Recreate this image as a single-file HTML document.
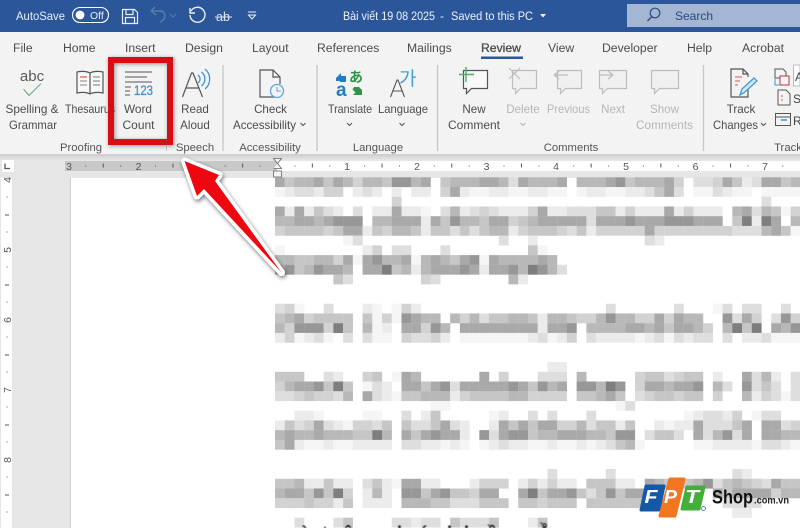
<!DOCTYPE html>
<html><head><meta charset="utf-8"><style>
html,body{margin:0;padding:0;width:800px;height:528px;overflow:hidden;background:#fff}
svg{position:absolute;left:0;top:0;display:block}
text{font-family:"Liberation Sans","Noto Sans CJK KR",sans-serif}
.l{font-size:11.6px;fill:#4c4c4c;text-anchor:middle}
.d{font-size:11.6px;fill:#b6b6b6;text-anchor:middle}
.g{font-size:11.3px;fill:#555;text-anchor:middle}
.tab{font-size:12.2px;fill:#4c4c4c}
.r{font-size:10.5px;fill:#555;text-anchor:middle}
#bt{position:absolute;left:0;top:520px;width:800px;height:8px;overflow:hidden;filter:blur(.4px)}
#bt span{position:absolute;top:1px;height:7px;width:14px;font:bold 18px/24px "Liberation Sans",sans-serif;color:#111}
</style></head><body>
<svg width="800" height="528" viewBox="0 0 800 528" style="filter:blur(.35px)">
<defs><linearGradient id="sh" x1="0" y1="0" x2="0" y2="1"><stop offset="0" stop-color="#cccccc"/><stop offset="1" stop-color="#e6e6e6"/></linearGradient>
<filter id="ds" x="-20%" y="-20%" width="150%" height="150%"><feDropShadow dx="1" dy="2" stdDeviation="2" flood-color="#000" flood-opacity=".55"/></filter>
<filter id="ds2" x="-20%" y="-20%" width="140%" height="140%"><feDropShadow dx="1" dy="1" stdDeviation="2" flood-color="#000" flood-opacity=".4"/></filter></defs>
<rect width="800" height="528" fill="#fff"/>
<!-- title bar -->
<rect width="800" height="32" fill="#2b579a"/>
<text x="16" y="20" font-size="12.2" fill="#e8eef7" textLength="49" lengthAdjust="spacingAndGlyphs">AutoSave</text>
<rect x="72.500" y="7.500" width="36" height="15" rx="7.500" fill="none" stroke="#fff" stroke-width="1.100"/>
<circle cx="80" cy="15" r="4.400" fill="#fff"/>
<text x="90" y="19" font-size="10.500" fill="#e8eef7">Off</text>
<path d="M122.500 9.500h12l3 3v11h-15zM126 9.500v5h7v-5M125.500 23.500v-6h9v6" fill="none" stroke="#e8eef7" stroke-width="1.200"/>
<path d="M151 11l4-4M151 11l5 4M151 11h9c4 0 5 3 5 5s-2 5-5 6" fill="none" stroke="#5c7cb0" stroke-width="1.400"/>
<path d="M170 14l3 3 3-3" fill="none" stroke="#5c7cb0" stroke-width="1"/>
<path d="M190 8v5h5M191 11a7.500 7.500 0 1 1-1 4" fill="none" stroke="#e8eef7" stroke-width="1.400"/>
<text x="216" y="21" font-size="12.500" fill="#dfe6f2">ab</text><path d="M215 17h17" stroke="#dfe6f2"/>
<path d="M248 12h8M248.500 15h7l-3.500 4z" fill="none" stroke="#e8eef7"/>
<text x="343" y="20" font-size="12.200" fill="#eef2f8" textLength="92" lengthAdjust="spacingAndGlyphs">Bài viết 19 08 2025</text>
<text x="440" y="20" font-size="12.200" fill="#eef2f8">-</text>
<text x="451" y="20" font-size="12.200" fill="#eef2f8" textLength="82" lengthAdjust="spacingAndGlyphs">Saved to this PC</text>
<path d="M540 14h6l-3 3.500z" fill="#eef2f8"/>
<rect x="627" y="4" width="173" height="23" fill="#a3b6d3"/>
<circle cx="655" cy="13" r="4.800" fill="none" stroke="#2b4a7d" stroke-width="1.200"/><path d="M651.500 17l-4 4" stroke="#2b4a7d" stroke-width="1.300"/>
<text x="675" y="20" font-size="12" fill="#2c4a7c">Search</text>
<!-- ribbon -->
<rect y="32" width="800" height="123" fill="#f3f3f3"/>
<text class="tab" x="13" y="52">File</text><text class="tab" x="63" y="52">Home</text><text class="tab" x="125" y="52">Insert</text><text class="tab" x="185" y="52">Design</text><text class="tab" x="252" y="52">Layout</text><text class="tab" x="317" y="52">References</text><text class="tab" x="407" y="52">Mailings</text><text class="tab" x="481" y="52" style="stroke:#4a4a4a;stroke-width:.3">Review</text><text class="tab" x="548" y="52">View</text><text class="tab" x="602" y="52">Developer</text><text class="tab" x="687" y="52">Help</text><text class="tab" x="742" y="52">Acrobat</text>
<rect x="481" y="56.500" width="42" height="2.500" fill="#2b579a"/>
<!-- separators -->
<path d="M223 65v86M317 65v86M437.500 65v86M703.500 65v86" stroke="#c6c6c6" stroke-width="1.300"/><path d="M166.500 146v5" stroke="#c6c6c6"/>
<!-- labels -->
<text class="l" x="32" y="113" textLength="53" lengthAdjust="spacingAndGlyphs">Spelling &amp;</text><text class="l" x="33" y="129" textLength="48" lengthAdjust="spacingAndGlyphs">Grammar</text>
<text class="l" x="90" y="113" textLength="50" lengthAdjust="spacingAndGlyphs">Thesaurus</text>
<text class="l" x="138" y="113" textLength="28" lengthAdjust="spacingAndGlyphs">Word</text><text class="l" x="138.500" y="129" textLength="32" lengthAdjust="spacingAndGlyphs">Count</text>
<text class="l" x="195" y="113">Read</text><text class="l" x="195" y="129">Aloud</text>
<text class="l" x="270.500" y="113">Check</text><text class="l" x="264.500" y="129" textLength="63" lengthAdjust="spacingAndGlyphs">Accessibility</text>
<path d="M300.500 123l2.500 2.500 2.500-2.500M347 123l2.500 2.500 2.500-2.500M399.500 123l2.500 2.500 2.500-2.500M761 123l2.500 2.500 2.500-2.500" fill="none" stroke="#555"/>
<path d="M520.500 123l2.500 2.500 2.500-2.500" fill="none" stroke="#b4b4b4"/>
<text class="l" x="350" y="113" textLength="44" lengthAdjust="spacingAndGlyphs">Translate</text><text class="l" x="403" y="113" textLength="50" lengthAdjust="spacingAndGlyphs">Language</text>
<text class="l" x="474" y="113">New</text><text class="l" x="474" y="129" textLength="52" lengthAdjust="spacingAndGlyphs">Comment</text>
<text class="d" x="523" y="113">Delete</text><text class="d" x="568.500" y="113" textLength="43" lengthAdjust="spacingAndGlyphs">Previous</text><text class="d" x="613" y="113">Next</text>
<text class="d" x="664.500" y="113">Show</text><text class="d" x="664.500" y="129" textLength="57" lengthAdjust="spacingAndGlyphs">Comments</text>
<text class="l" x="741" y="113">Track</text><text class="l" x="735.500" y="129" textLength="45" lengthAdjust="spacingAndGlyphs">Changes</text>
<text class="g" x="81" y="151">Proofing</text><text class="g" x="195" y="151">Speech</text><text class="g" x="270" y="151">Accessibility</text><text class="g" x="378" y="151">Language</text><text class="g" x="571" y="151">Comments</text><text class="g" x="788" y="151">Track</text>
<!-- icons: proofing -->
<text x="32" y="81" font-size="15" fill="#5a5a5a" text-anchor="middle">abc</text>
<path d="M23.500 89l5.500 6.500 12-12" fill="none" stroke="#68b386" stroke-width="1.200"/>
<path d="M90 73c-4-2-8-2-13-1v21c5-1 9-1 13 1c4-2 8-2 13-1V72c-5-1-9-1-13 1zM90 73v21" fill="#f8f8f8" stroke="#555" stroke-width="1.200"/>
<path d="M80 77h7" stroke="#d9534f" stroke-width="1.200"/><path d="M80 81h7M80 85h7" stroke="#888"/><path d="M93 77h7M93 81h7M93 85h7" stroke="#777"/>
<!-- word count -->
<path d="M125 72h27M125 77h22M125 82h27M125 87h6M125 91h5M125 95h5" stroke="#555" stroke-width="1.100"/>
<text x="134" y="95" font-size="13.500" fill="#3d95d1" textLength="19" lengthAdjust="spacingAndGlyphs" style="stroke:#3d95d1;stroke-width:.3">123</text>
<!-- read aloud -->
<path d="M182.500 97l9-24h1.500l9.500 24M186 88h13" fill="none" stroke="#555" stroke-width="1.200"/>
<path d="M198 75a5 5 0 0 1 0 8M201.500 72a9 9 0 0 1 0 14M205 69a13 13 0 0 1 0 20" fill="none" stroke="#3d95d1" stroke-width="1.300"/>
<!-- accessibility -->
<path d="M276 97h-16V70h13l7 7v7M273 70v7h7" fill="none" stroke="#555" stroke-width="1.200"/>
<circle cx="277" cy="91" r="6.500" fill="#f3f3f3" stroke="#5aa7dc" stroke-width="1.300"/><path d="M277 87v4h4" fill="none" stroke="#5aa7dc"/>
<!-- translate -->
<path d="M336 78l5-5v3h5v6h-6v-1h-4z" fill="#1f7fc4"/>
<text x="336" y="96" font-size="19" font-weight="bold" fill="#1f7fc4">a</text>
<text x="349" y="82" font-size="14" font-weight="bold" fill="#2e9447" style="font-family:'Noto Sans CJK JP',sans-serif">あ</text>
<path d="M354 87h5l3 3v5h-9l2.500-2.500-3-3z" fill="#2e9447"/>
<!-- language -->
<path d="M390.500 97l6.500-17h1l6.500 17M393 91h9" fill="none" stroke="#555" stroke-width="1.100"/>
<text x="399" y="85" font-size="19" fill="#45a0d8" style="font-family:'Noto Sans CJK KR',sans-serif">가</text>
<!-- comments -->
<path d="M463.500 70.500h24v18h-16l-5 5v-5h-3z" fill="#f8f8f8" stroke="#555" stroke-width="1.200"/>
<path d="M466 67v15M459 74.500h15" stroke="#4caf6a" stroke-width="1.400"/>
<g fill="#f0f0f0" stroke="#bdbdbd" stroke-width="1.200">
<path d="M512.500 70.500h24v18h-16l-5 5v-5h-3z"/><path d="M557.500 70.500h24v18h-16l-5 5v-5h-3z"/><path d="M599.500 70.500h27v18h-19l-5 5v-5h-3z"/><path d="M651.500 70.500h27v18h-19l-5 5v-5h-3z"/></g>
<path d="M509 68l11 11M520 68l-11 11M554 75h14M554 75l5-4M554 75l5 4M599 75h14M613 75l-5-4M613 75l-5 4" fill="none" stroke="#bdbdbd" stroke-width="1.200"/>
<!-- track changes -->
<path d="M748 87v10h-17V69h12l5 5v3M743 69v5h5" fill="none" stroke="#555" stroke-width="1.200"/>
<path d="M735 77h7M735 81h5M735 85h3" stroke="#d9534f"/>
<path d="M740 95l2-6 12-11 3 3-12 11z" fill="#cfe6f6" stroke="#3d95d1" stroke-width="1.200"/>
<!-- right tools -->
<path d="M775 69h8l3 3v6h-11z" fill="none" stroke="#555"/><path d="M780 76h9v9h-9z" fill="#f8f8f8" stroke="#b33"/><path d="M775 79v6h4" fill="none" stroke="#3d95d1"/>
<path d="M778 90h8l4 4v11h-12z" fill="none" stroke="#555"/><path d="M781 96h2M781 100h2" stroke="#d9534f"/>
<path d="M775.500 113.500h15v12h-15zM775.500 117h15" fill="none" stroke="#555"/><path d="M781 120h6" stroke="#3d95d1" stroke-width="1.500"/>
<rect x="793.500" y="65" width="6.500" height="21" fill="#fff" stroke="#bbb"/>
<text x="795" y="81" font-size="12" fill="#444">A</text><text x="793" y="103" font-size="12" fill="#444">S</text><text x="793" y="125" font-size="12" fill="#444">R</text>
<!-- ruler band -->
<rect y="155" width="800" height="23" fill="#e6e6e6"/>
<rect y="154" width="800" height="6" fill="url(#sh)"/>
<rect x="65" y="161" width="212" height="10" fill="#c8c8c8"/>
<rect x="277" y="161" width="523" height="10" fill="#fff"/>
<rect x="2" y="160" width="12" height="12" fill="#fff"/>
<path d="M5 163.500v5h5" fill="none" stroke="#555" stroke-width="1.300"/>
<g id="ticks" fill="#555"></g>
<text class="r" x="69" y="170">3</text><text class="r" x="138.500" y="170">2</text><text class="r" x="347" y="170">1</text><text class="r" x="417" y="170">2</text><text class="r" x="486.500" y="170">3</text><text class="r" x="556" y="170">4</text><text class="r" x="626" y="170">5</text><text class="r" x="695.500" y="170">6</text><text class="r" x="765" y="170">7</text>
<path d="M273.500 158.500h8l-4 5zM273.500 168.500h8l-4-5" fill="#f4f4f4" stroke="#666" stroke-width=".8"/>
<rect x="273.500" y="171" width="8" height="6" fill="#f4f4f4" stroke="#666" stroke-width=".8"/>
<!-- page area -->
<rect y="178" width="71" height="350" fill="#e6e6e6"/>
<rect x="71" y="178" width="729" height="350" fill="#fff"/>
<rect x="70" y="178" width="1" height="350" fill="#cfcfcf"/>
<rect x="1" y="178" width="11" height="350" fill="#fff"/>
<g id="vt" fill="#555"></g>
<text class="r" transform="translate(11,180) rotate(-90)">4</text>
<text class="r" transform="translate(11,250) rotate(-90)">5</text>
<text class="r" transform="translate(11,320) rotate(-90)">6</text>
<text class="r" transform="translate(11,390) rotate(-90)">7</text>
<text class="r" transform="translate(11,460) rotate(-90)">8</text>
<g id="mo"></g>
<!-- red box -->
<rect x="111" y="60" width="59" height="82" fill="none" stroke="#d90c14" stroke-width="6" filter="url(#ds2)"/>
<!-- arrow -->
<path d="M184.500 161L219 175L215 181L281.500 272.500L204 189L197 196Z" fill="#ee0610" stroke="#fff" stroke-width="7" stroke-linejoin="round" filter="url(#ds)"/>
<path d="M184.500 161L219 175L215 181L281.500 272.500L204 189L197 196Z" fill="#ee0610"/>
<!-- logo -->
<path d="M646 486h18l-5 24h-18z" fill="#1458a8" stroke="#1458a8" stroke-width="3" stroke-linejoin="round"/>
<path d="M670 479h14l-9 37h-15z" fill="#f2761f" stroke="#f2761f" stroke-width="3" stroke-linejoin="round"/>
<path d="M687 487h17l-5 22h-17z" fill="#43ae3a" stroke="#43ae3a" stroke-width="3" stroke-linejoin="round"/>
<text x="644.500" y="503" font-size="18" font-weight="bold" font-style="italic" fill="#fff" textLength="13" lengthAdjust="spacingAndGlyphs">F</text>
<text x="664" y="503" font-size="18" font-weight="bold" font-style="italic" fill="#fff" textLength="13" lengthAdjust="spacingAndGlyphs">P</text>
<text x="685" y="503" font-size="18" font-weight="bold" font-style="italic" fill="#fff" textLength="14" lengthAdjust="spacingAndGlyphs">T</text>
<circle cx="703.500" cy="508.500" r="2" fill="none" stroke="#1458a8" stroke-width=".7"/>
<text x="712" y="503.500" font-size="19" font-weight="bold" fill="#111" textLength="41" lengthAdjust="spacingAndGlyphs">Shop</text>
<text x="754" y="503.500" font-size="10" font-weight="bold" fill="#222" textLength="35" lengthAdjust="spacingAndGlyphs">.com.vn</text>
</svg>
<div id="bt"><span style="left:300px">à</span><span style="left:322px">t</span><span style="left:343px">ê</span><span style="left:397px">k</span><span style="left:418px">ó</span><span style="left:447px">h</span><span style="left:464px">h</span><span style="left:487px">ề</span><span style="left:538px">Ầ</span></div>
<script>
var R={0:"7566757646658867.5666776376667.66678566674.334752377566",
1:"1233244.232.2.22.4721122112211.12211223573.113211.11111",
2:"............4.....................................3",
3:"7272532.3.227221.36234322247223335524222724222.67365144",
4:"667767888. 66777 2 7 5866577456 77777 3 7778777888777 . 59297.66",
5:"455554577 2 54665 2 5 5353566 2 4 5 55435 2 44444 7 44444444 33367515",
6:".......13 .............. 3 .. 2 ........... 32",
7:"1........ 24 . 33 ... 3 ........ 5 1",
8:"66556647 1 78667 1 676578 1 76666 7 6",
9:"78568776 . 77956 2 677787 2 77869 8 6 3",
10:"......53 ....... 43 ....... 62",
13:"341..3...21.142 ................... 3 ...... 3 ... 1 3 . 33 .. 3",
14:"56745555.5 1418766.64 6355665266 5446866447 4766..8374 .3844",
15:"64888495.6 12.77486.7 7777777277 8.66667767 57764.6959 .7688",
16:"241231.3.3 11.43342.1 1111112312 4.32222123 13233.3.22 31111",
19:"............................22",
20:"555..32..4 5.176..... .7.4...333 .6.....455 3455.2..73 62.33",
21:"46778595.1 32.7757837 7777875867 .88698.477 6778.63.83 53.34",
22:"33454436.7 3215566624 5555664444 .55675.345 5455.4..62 43134",
23:"................11................. 13",
24:"..221....1 1..3.25... ..12..3.3. ..3....... ..123324.1 33...",
25:"2534732144 35.5335732 ..27575774 4635525..2 122733357. 77344",
26:"6766766655 96.7578772 .837885667 7766588.35 53.736837. 77666",
27:"5721121122 22.3322121 .123221121 12123561.. ...1122221 33211",
30:"............................3 ..... 3 ............ 32 ..... 3",
31:"55622522.3 5217722... 2444.24242 2.55522.76 5656835654 37555",
32:"67758594.2 62.8857855 477..79577 85358577.. .....75777 74666",
33:"44454425.2 22.6665533 3555.55455 5.555555.. ......3333",
34:"...............................................22",
35:"..3...35....33233.53335...25"};
var G={1:"#f5f5f5",2:"#ebebeb",3:"#dedede",4:"#d2d2d2",5:"#c6c6c6",6:"#b8b8b8",7:"#a9a9a9",8:"#979797",9:"#7e7e7e"};
var s="";
for(var r in R){var t=R[r].replace(/ /g,"");var y=177.3+9.725*r;
 for(var c=0;c<t.length;c++){var k=t[c];if(k!="."&&c<54)s+='<rect x="'+(275+9.73*c).toFixed(2)+'" y="'+y.toFixed(2)+'" width="'+Math.min(9.85,800-275-9.73*c).toFixed(2)+'" height="9.85" fill="'+G[k]+'"/>';}}
document.getElementById("mo").innerHTML=s;
var u="";
function h(x,big){u+='<rect x="'+(x-.5)+'" y="'+(big?163.5:165.5)+'" width="1" height="'+(big?4:1)+'"/>';}
for(var i=-3;i<8;i++){var z=277.5+69.7*i;[17.4,34.85,52.3].forEach(function(d,j){var x=z+d;if(x>66&&x<799)h(x,j==1);});}
document.getElementById("ticks").innerHTML=u;
var v="";
for(var q=0;q<5;q++){var b=180+70*q;[17,35,52].forEach(function(d,j){var y=b+d;v+='<rect x="'+(j==1?5:6.5)+'" y="'+(y-.5)+'" width="'+(j==1?4:1)+'" height="1"/>';});}
document.getElementById("vt").innerHTML=v;
</script>
</body></html>
